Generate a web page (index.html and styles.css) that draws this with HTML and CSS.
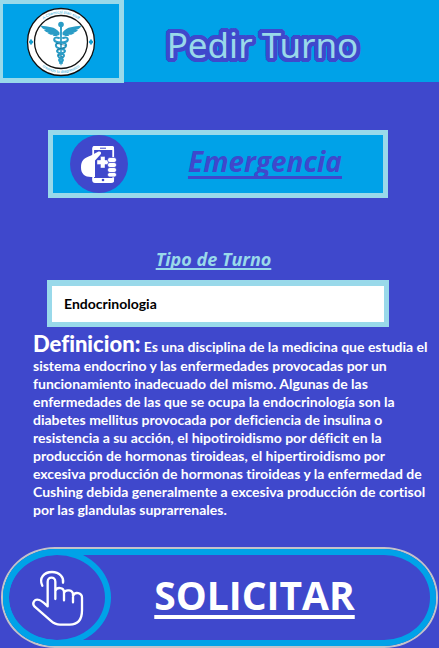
FILE: index.html
```html
<!DOCTYPE html>
<html lang="es">
<head>
<meta charset="utf-8">
<meta name="viewport" content="width=device-width, initial-scale=1">
<title>Pedir Turno</title>
<link rel="stylesheet" href="styles.css">
</head>
<body>
<header class="header">
  <a class="logo" href="#" aria-label="Inicio">
    <svg class="logo-art" viewBox="0 0 70 70" aria-hidden="true">
      <defs>
        <path id="arc-top" d="M6.500 35a28.500 28.500 0 0 1 57 0"/>
        <path id="arc-bottom" d="M4 35a31 31 0 0 0 62 0"/>
      </defs>
      <circle cx="35" cy="35" r="33.500" fill="#fff" stroke="#111" stroke-width="1.300"/>
      <circle cx="35" cy="35" r="26.500" fill="#fff" stroke="#111" stroke-width="1.300"/>
      <text class="logo-text"><textPath href="#arc-top" startOffset="50%">A Chemical plan staff</textPath></text>
      <text class="logo-text"><textPath href="#arc-bottom" startOffset="50%">creando tu diagnostico</textPath></text>
      <path d="M5 32.500l1.800 2.500L5 37.500 3.200 35zM65 32.500l1.800 2.500-1.800 2.500-1.800-2.500z" fill="#149ed0" stroke="#149ed0"/>
      <g fill="#2a9cc6">
        <circle cx="35" cy="17.500" r="2.800"/>
        <path d="M34 19h2l-.4 38-.6 2-.6-2z"/>
        <path d="M33.500 25.500C29 19 22 20 14.500 18.500c1.500 3 3.500 4 5.500 4.300-1 .2-1.500.2-2 .1 1.500 2 3.200 2.600 5 2.700l-1.500.5c2 1.800 4 2 6 1.500l-.8.9c2.500 1 5 .5 6.800-1zM36.500 25.500C41 19 48 20 55.500 18.500c-1.500 3-3.500 4-5.500 4.300 1 .2 1.500.2 2 .1-1.500 2-3.200 2.600-5 2.700l1.500.5c-2 1.800-4 2-6 1.500l.8.9c-2.500 1-5 .5-6.800-1z"/>
      </g>
      <g fill="none" stroke="#2a9cc6" stroke-width="2" stroke-linecap="round">
        <path d="M33 31c-6-2-6 3-2 4s10 0 9 4-9 2-9 5 8 2 7 5-5 2-5 4 3 1 3 3"/>
        <path d="M37 31c6-2 6 3 2 4s-10 0-9 4 9 2 9 5-8 2-7 5 5 2 5 4-3 1-3 3"/>
      </g>
      <g fill="none" stroke="#145a78" stroke-width=".6"><path d="M30 36c3 1.500 7 1 10 3M31 43c3-2 6-2 8-2M32 48l5 2"/></g>
    </svg>
  </a>
  <h1 class="title">Pedir Turno</h1>
</header>
<main class="main">
  <button class="emergency" type="button">
    <svg class="emergency-icon" viewBox="0 0 58 58" aria-hidden="true">
      <circle cx="29" cy="29" r="29" fill="#3f48cc"/>
      <rect x="23.200" y="12" width="20" height="35" rx="2.500" fill="#3f48cc" stroke="#fff" stroke-width="1.800"/>
      <path d="M22.500 12.500q0-1.500 1.500-1.500h18.500q1.500 0 1.500 1.500v2.500h-21.500zM22.500 43h21.500v3q0 1.500-1.500 1.500h-18.500q-1.500 0-1.500-1.500z" fill="#fff"/>
      <path d="M30 13.200h6" stroke="#3f48cc"/>
      <circle cx="33" cy="45" r="1.300" fill="#3f48cc"/>
      <path d="M21 20.500l7.500-3.900c2-.8 3.500 1.400 2 3L25 25.500v16.500h-4c-6 0-10-3-10-9.500 0-7 3-9.500 10-12z" fill="#fff"/>
      <path d="M30.500 21.500h4.500v3.500h3.500v4.500H35v3.500h-4.500v-3.500H27V25h3.500z" fill="#fff" stroke="#3f48cc" stroke-width=".4"/>
      <g fill="#fff" stroke="#3f48cc" stroke-width=".7">
        <rect x="37.500" y="22.500" width="9" height="5" rx="2.400"/><rect x="37.500" y="27.500" width="9" height="5" rx="2.400"/>
        <rect x="37.500" y="32.500" width="9" height="5" rx="2.400"/><rect x="37.500" y="37.500" width="9" height="4.500" rx="2.200"/>
      </g>
    </svg>
    <span class="emergency-text">Emergencia</span>
  </button>
  <label class="type-label" for="tipo">Tipo de Turno</label>
  <select class="type-select" id="tipo">
    <option>Endocrinologia</option>
  </select>
  <p class="definition"><strong class="term">Definicion:</strong> Es una disciplina de la medicina que estudia el sistema endocrino y las enfermedades provocadas por un funcionamiento inadecuado del mismo. Algunas de las enfermedades de las que se ocupa la endocrinología son la diabetes mellitus provocada por deficiencia de insulina o resistencia a su acción, el hipotiroidismo por déficit en la producción de hormonas tiroideas, el hipertiroidismo por excesiva producción de hormonas tiroideas y la enfermedad de Cushing debida generalmente a excesiva producción de cortisol por las glandulas suprarrenales.</p>
</main>
<footer class="footer">
  <button class="submit" type="submit">
    <span class="submit-inner">
      <span class="submit-ring">
        <svg class="hand" viewBox="-6 8 186 210" aria-hidden="true">
          <g fill="none" stroke="#fff" stroke-width="7" stroke-linecap="round" stroke-linejoin="round">
            <path d="M43 76C32 53 48 35 72 35s36 17 33 32"/>
            <path d="M59 138V64c0-16 23-16 23 0v52M82 92c4-13 26-12 26 4v24M108 98c4-12 27-10 27 5v23M135 106c6-13 27-9 27 6v38c0 28-13 43-37 43H96c-12 0-20-5-28-12L20 139c-10-11 0-25 14-20 9 3 16 11 25 19"/>
          </g>
        </svg>
      </span>
      <span class="submit-text">SOLICITAR</span>
    </span>
  </button>
</footer>
</body>
</html>
```
FILE: styles.css
```css
:root {
  --indigo: #3f48cc;
  --sky: #00a2e8;
  --pale: #99d9ea;
}

* {
  box-sizing: border-box;
}

body {
  margin: 0;
  background: var(--indigo);
  color: #fff;
  font-family: Lato, sans-serif;
  font-variant-ligatures: none;
}

.header {
  display: flex;
  align-items: flex-start;
  height: 82px;
  background: var(--sky);
}

.logo {
  display: flex;
  flex: none;
  justify-content: center;
  width: 124px;
  height: 83px;
  padding-top: 3px;
  border: 5px solid var(--pale);
  border-width: 4px 5px 5px 3px;
}

.logo-art {
  width: 70px;
  height: 70px;
}

.logo-text {
  fill: #2aa9d6;
  font-family: "Liberation Sans", sans-serif;
  font-size: 4px;
  text-anchor: middle;
}

.title {
  flex: 1;
  margin: 0;
  padding: 20px 38px 0 0;
  color: var(--pale);
  font-family: "Noto Sans", sans-serif;
  font-size: 35px;
  font-weight: 400;
  line-height: 50px;
  text-align: center;
  /* Rounded outline: copies of the text on a 4px circle, plus an inner ring. */
  text-shadow:
    4px 0 var(--indigo), -4px 0 var(--indigo), 0 4px var(--indigo), 0 -4px var(--indigo),
    4px 2px var(--indigo), 4px -2px var(--indigo), -4px 2px var(--indigo), -4px -2px var(--indigo),
    2px 4px var(--indigo), 2px -4px var(--indigo), -2px 4px var(--indigo), -2px -4px var(--indigo),
    3px 3px var(--indigo), 3px -3px var(--indigo), -3px 3px var(--indigo), -3px -3px var(--indigo),
    2px 0 var(--indigo), -2px 0 var(--indigo), 0 2px var(--indigo), 0 -2px var(--indigo);
}

.main {
  display: flex;
  flex-direction: column;
  padding: 48px 5px 0 33px;
}

.emergency {
  display: flex;
  align-items: center;
  justify-content: space-between;
  height: 68px;
  margin: 0 46px 0 15px;
  padding: 0 41px 0 17px;
  border: 5px solid var(--pale);
  background: var(--sky);
  color: var(--indigo);
}

.emergency-icon {
  width: 58px;
  height: 58px;
}

.emergency-text {
  padding-bottom: 6px;
  font: italic 700 28px/40px "Open Sans", sans-serif;
  text-decoration: underline;
  text-decoration-thickness: 3px;
  text-decoration-skip-ink: none;
  text-underline-offset: 4px;
}

.type-label {
  align-self: center;
  margin-top: 48px;
  padding-right: 40px;
  color: var(--pale);
  font: italic 700 18px/26px "Open Sans", sans-serif;
  text-decoration: underline;
  text-decoration-thickness: 2px;
  text-decoration-skip-ink: none;
  text-underline-offset: 2px;
}

.type-select {
  height: 47px;
  margin: 8px 45px 0 14px;
  padding: 0 12px;
  border: 5px solid var(--pale);
  border-width: 6px 5px 5px;
  border-radius: 0;
  background: #fff;
  color: #000;
  font: 700 14px/20px Lato, sans-serif;
  appearance: none;
}

.definition {
  margin: 4px 0 0;
  font-size: 14px;
  font-weight: 700;
  line-height: 18px;
}

.term {
  font-size: 22px;
  line-height: 26px;
}

.footer {
  padding: 28px 1px 0;
}

.submit {
  display: block;
  width: 100%;
  height: 101px;
  padding: 0;
  border: 2px solid #c3c3c9;
  border-radius: 54px / 50px;
  background: var(--indigo);
  color: #fff;
}

.submit-inner {
  display: flex;
  align-items: center;
  height: 97px;
  border: 6px solid var(--sky);
  border-radius: 52px / 48px;
}

.submit-ring {
  display: flex;
  flex: none;
  align-items: center;
  justify-content: center;
  width: 108px;
  height: 97px;
  margin-left: -6px;
  border: 6px solid var(--sky);
  border-radius: 50%;
}

.hand {
  flex: none;
  width: 62px;
  height: 70px;
}

.submit-text {
  flex: 1;
  padding: 0 32px 6px 0;
  font: 700 39px/50px "Open Sans", sans-serif;
  text-align: center;
  text-decoration: underline;
  text-decoration-thickness: 4px;
  text-underline-offset: 5px;
}
```
